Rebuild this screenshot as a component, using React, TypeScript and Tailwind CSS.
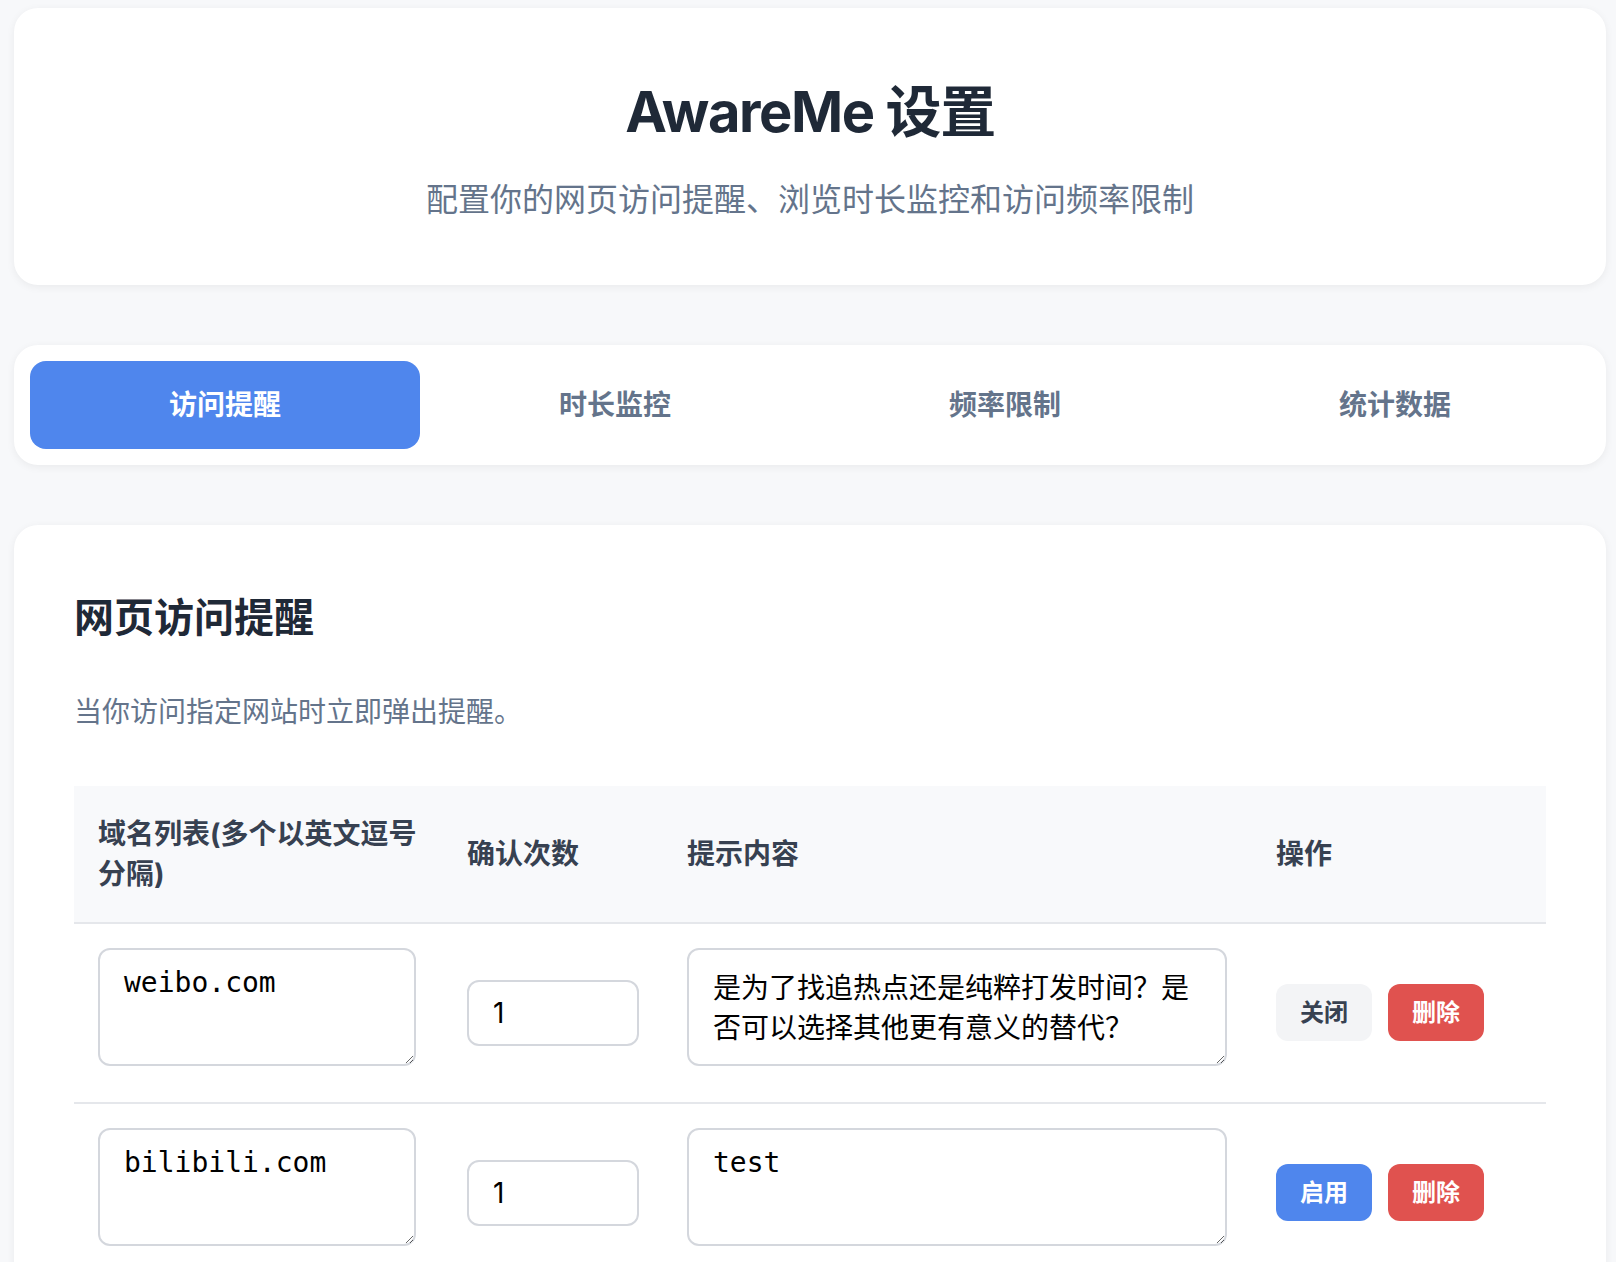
import React from "react";

const sans = { fontFamily: 'Inter, "Noto Sans CJK SC", sans-serif' };
const mono = { fontFamily: '"DejaVu Sans Mono", "Noto Sans CJK SC", monospace' };

type Row = { domain: string; count: string; msg: string; enabled: boolean };

const rows: Row[] = [
  { domain: "weibo.com", count: "1", msg: "是为了找追热点还是纯粹打发时间？是否可以选择其他更有意义的替代？", enabled: true },
  { domain: "bilibili.com", count: "1", msg: "test", enabled: false },
];

const tabs = ["访问提醒", "时长监控", "频率限制", "统计数据"];

export default function App() {
  return (
    <div className="min-h-screen bg-[#f7f8fa] pt-[8px] pl-[14px] pr-[10px] pb-10" style={sans}>
      {/* Header card */}
      <div className="bg-white rounded-[24px] shadow-[0_2px_8px_rgba(0,0,0,0.06)] pt-[62px] pb-[61px] text-center">
        <h1 className="text-[56px] leading-[84px] font-bold text-[#1f2937] tracking-[-0.025em]">AwareMe 设置</h1>
        <p className="mt-[22px] text-[32px] leading-[48px] text-[#64748b]">配置你的网页访问提醒、浏览时长监控和访问频率限制</p>
      </div>

      {/* Tabs */}
      <div className="mt-[60px] bg-white rounded-[24px] shadow-[0_2px_8px_rgba(0,0,0,0.06)] p-4 grid grid-cols-4">
        {tabs.map((t, i) => (
          <button
            key={t}
            className={
              i === 0
                ? "h-[88px] rounded-[16px] bg-[#4f86ed] text-white text-[28px] leading-[40px] font-bold"
                : "h-[88px] rounded-[16px] text-[#64748b] text-[28px] leading-[40px] font-bold"
            }
          >
            {t}
          </button>
        ))}
      </div>

      {/* Main card */}
      <div className="mt-[60px] bg-white rounded-[24px] shadow-[0_2px_8px_rgba(0,0,0,0.06)] pt-[65px] px-[60px] pb-[60px]">
        <h2 className="text-[40px] leading-[56px] font-bold text-[#1f2937]">网页访问提醒</h2>
        <p className="mt-[46px] text-[28px] leading-[40px] text-[#64748b]">当你访问指定网站时立即弹出提醒。</p>

        <table className="mt-[54px] w-full table-fixed border-collapse">
          <colgroup>
            <col className="w-[369px]" />
            <col className="w-[220px]" />
            <col className="w-[589px]" />
            <col />
          </colgroup>
          <thead>
            <tr className="bg-[#f8f9fb] border-b-2 border-[#e5e7eb]">
              <th className="px-6 py-7 text-left align-middle text-[28px] leading-[40px] font-bold text-[#374151]">域名列表(多个以英文逗号分隔)</th>
              <th className="px-6 py-7 text-left align-middle text-[28px] leading-[40px] font-bold text-[#374151]">确认次数</th>
              <th className="px-6 py-7 text-left align-middle text-[28px] leading-[40px] font-bold text-[#374151]">提示内容</th>
              <th className="px-6 py-7 text-left align-middle text-[28px] leading-[40px] font-bold text-[#374151]">操作</th>
            </tr>
          </thead>
          <tbody>
            {rows.map((r) => (
              <tr key={r.domain} className="border-b-2 border-[#e5e7eb]">
                <td className="px-6 pt-6 pb-[25px] align-middle">
                  <textarea
                    defaultValue={r.domain}
                    className="block mb-[11px] w-[318px] h-[118px] border-2 border-[#d4d7dd] rounded-[12px] px-6 py-4 text-[28px] leading-[normal] text-black bg-white outline-none"
                    style={mono}
                  />
                </td>
                <td className="px-6 pt-6 pb-[25px] align-middle">
                  <input
                    type="text"
                    defaultValue={r.count}
                    className="block w-[172px] h-[66px] border-2 border-[#d4d7dd] rounded-[12px] px-6 text-[28px] text-black bg-white outline-none"
                    style={sans}
                  />
                </td>
                <td className="px-6 pt-6 pb-[25px] align-middle">
                  <textarea
                    defaultValue={r.msg}
                    className="block mb-[11px] w-[540px] h-[118px] border-2 border-[#d4d7dd] rounded-[12px] px-6 py-4 text-[28px] leading-[normal] text-black bg-white outline-none"
                    style={mono}
                  />
                </td>
                <td className="px-6 pt-6 pb-[25px] align-middle">
                  <div className="flex gap-4">
                    {r.enabled ? (
                      <button className="w-[96px] h-[57px] rounded-[12px] bg-[#f3f4f6] text-[#374151] text-[24px] font-semibold">关闭</button>
                    ) : (
                      <button className="w-[96px] h-[57px] rounded-[12px] bg-[#4f86ed] text-white text-[24px] font-semibold">启用</button>
                    )}
                    <button className="w-[96px] h-[57px] rounded-[12px] bg-[#e0524f] text-white text-[24px] font-semibold">删除</button>
                  </div>
                </td>
              </tr>
            ))}
          </tbody>
        </table>
      </div>
    </div>
  );
}
